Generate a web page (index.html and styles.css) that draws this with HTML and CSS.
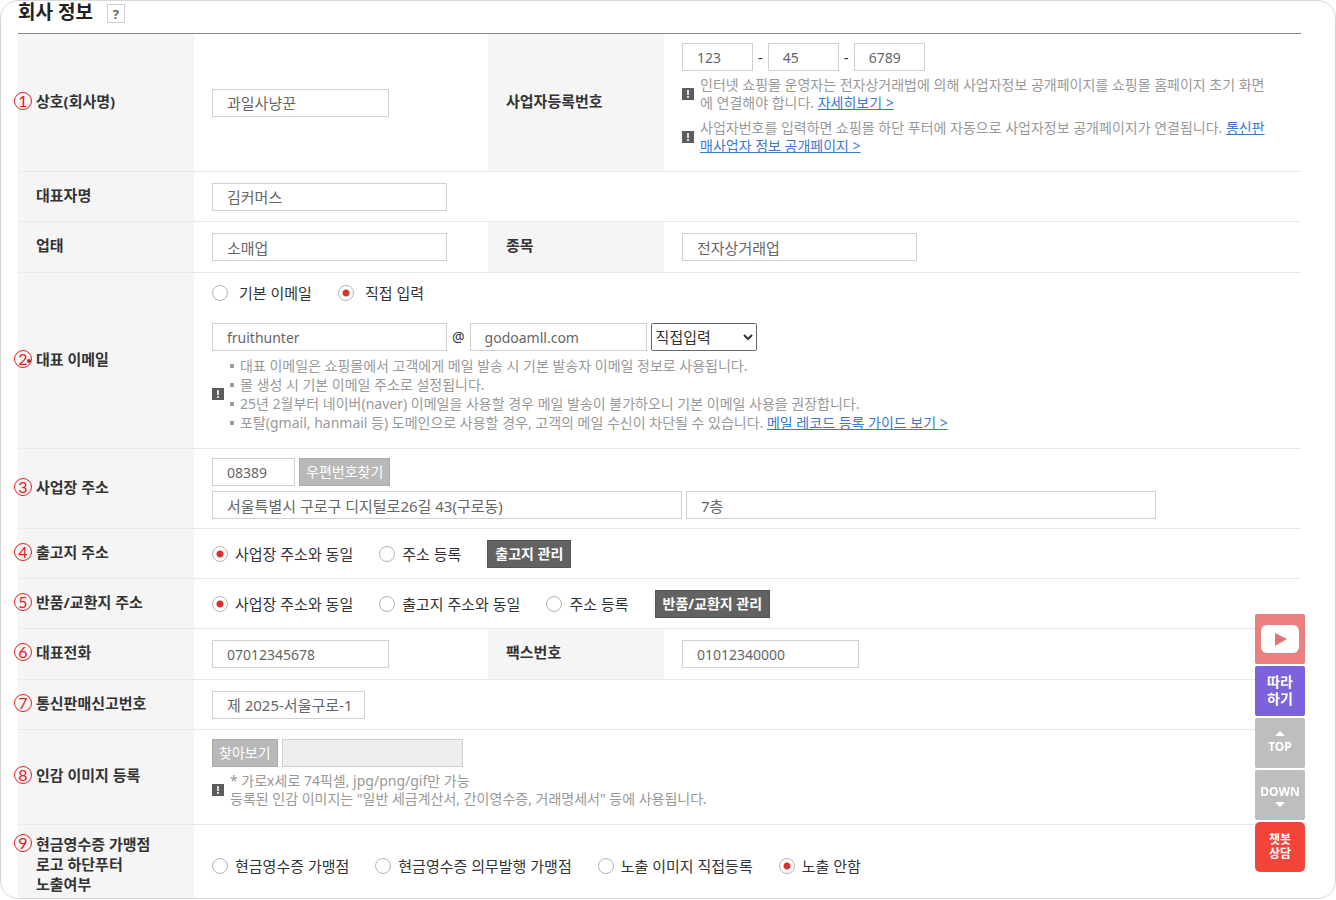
FILE: index.html
```html
<!DOCTYPE html>
<html lang="ko">
<head>
  <meta charset="UTF-8">
  <meta name="viewport" content="width=device-width, initial-scale=1.0">
  <title>회사 정보</title>
  <link rel="stylesheet" href="styles.css">
</head>
<body>
  <main class="frame">
    <header class="page-title">
      <h1>회사 정보</h1>
      <button type="button" class="btn-help">?</button>
    </header>

    <form>
      <table class="form-table">
        <colgroup>
          <col class="col-label"><col class="col-field"><col class="col-label"><col>
        </colgroup>
        <tbody>
          <tr>
            <th><div class="label"><span class="num">1</span><label for="company">상호(회사명)</label></div></th>
            <td><input type="text" id="company" class="w-md" value="과일사냥꾼"></td>
            <th><div class="label"><label for="bizNo1">사업자등록번호</label></div></th>
            <td>
              <div class="line biz-no">
                <input type="text" id="bizNo1" class="w-xs latin" value="123">
                <span>-</span>
                <input type="text" class="w-xs latin" value="45" aria-label="사업자등록번호">
                <span>-</span>
                <input type="text" class="w-xs latin" value="6789" aria-label="사업자등록번호">
              </div>
              <div class="notice">
                <svg class="mark" viewBox="0 0 12 12"><rect width="12" height="12" fill="#5c5c5c"/><path d="M5 2h2v5H5zM5 8h2v2H5z" fill="#ddd"/></svg>
                <p>인터넷 쇼핑몰 운영자는 전자상거래법에 의해 사업자정보 공개페이지를 쇼핑몰 홈페이지 초기 화면에 연결해야 합니다. <a href="#">자세히보기 &gt;</a></p>
              </div>
              <div class="notice">
                <svg class="mark" viewBox="0 0 12 12"><rect width="12" height="12" fill="#5c5c5c"/><path d="M5 2h2v5H5zM5 8h2v2H5z" fill="#ddd"/></svg>
                <p>사업자번호를 입력하면 쇼핑몰 하단 푸터에 자동으로 사업자정보 공개페이지가 연결됩니다. <a href="#">통신판매사업자 정보 공개페이지 &gt;</a></p>
              </div>
            </td>
          </tr>
          <tr>
            <th><div class="label"><label for="ceo">대표자명</label></div></th>
            <td colspan="3"><input type="text" id="ceo" class="w-lg" value="김커머스"></td>
          </tr>
          <tr class="row-pair">
            <th><div class="label"><label for="service">업태</label></div></th>
            <td><input type="text" id="service" class="w-lg" value="소매업"></td>
            <th><div class="label"><label for="item">종목</label></div></th>
            <td><input type="text" id="item" class="w-lg" value="전자상거래업"></td>
          </tr>
          <tr>
            <th><div class="label"><span class="num dot">2</span><label for="emailId">대표 이메일</label></div></th>
            <td colspan="3">
              <div class="radios radios-wide">
                <label><input type="radio" name="emailType">기본 이메일</label>
                <label><input type="radio" name="emailType" checked>직접 입력</label>
              </div>
              <div class="line">
                <input type="text" id="emailId" class="w-lg latin" value="fruithunter">
                <span class="at">@</span>
                <input type="text" class="w-md latin" value="godoamll.com" aria-label="이메일 도메인">
                <select aria-label="도메인 선택">
                  <option>직접입력</option>
                </select>
              </div>
              <div class="notice">
                <svg class="mark" viewBox="0 0 12 12"><rect width="12" height="12" fill="#5c5c5c"/><path d="M5 2h2v5H5zM5 8h2v2H5z" fill="#ddd"/></svg>
                <ul>
                  <li>대표 이메일은 쇼핑몰에서 고객에게 메일 발송 시 기본 발송자 이메일 정보로 사용됩니다.</li>
                  <li>몰 생성 시 기본 이메일 주소로 설정됩니다.</li>
                  <li>25년 2월부터 네이버(naver) 이메일을 사용할 경우 메일 발송이 불가하오니 기본 이메일 사용을 권장합니다.</li>
                  <li>포탈(gmail, hanmail 등) 도메인으로 사용할 경우, 고객의 메일 수신이 차단될 수 있습니다. <a href="#">메일 레코드 등록 가이드 보기 &gt;</a></li>
                </ul>
              </div>
            </td>
          </tr>
          <tr>
            <th><div class="label"><span class="num">3</span><label for="zip">사업장 주소</label></div></th>
            <td colspan="3">
              <div class="line">
                <input type="text" id="zip" class="w-sm latin" value="08389">
                <button type="button" class="btn btn-gray">우편번호찾기</button>
              </div>
              <div class="line line-addr">
                <input type="text" class="w-xl" value="서울특별시 구로구 디지털로26길 43(구로동)" aria-label="주소">
                <input type="text" class="w-xl" value="7층" aria-label="상세주소">
              </div>
            </td>
          </tr>
          <tr>
            <th><div class="label"><span class="num">4</span>출고지 주소</div></th>
            <td colspan="3">
              <div class="radios">
                <label><input type="radio" name="shipAddr" checked>사업장 주소와 동일</label>
                <label><input type="radio" name="shipAddr">주소 등록</label>
                <button type="button" class="btn btn-dark">출고지 관리</button>
              </div>
            </td>
          </tr>
          <tr>
            <th><div class="label"><span class="num">5</span>반품/교환지 주소</div></th>
            <td colspan="3">
              <div class="radios">
                <label><input type="radio" name="returnAddr" checked>사업장 주소와 동일</label>
                <label><input type="radio" name="returnAddr">출고지 주소와 동일</label>
                <label><input type="radio" name="returnAddr">주소 등록</label>
                <button type="button" class="btn btn-dark">반품/교환지 관리</button>
              </div>
            </td>
          </tr>
          <tr class="row-pair">
            <th><div class="label"><span class="num">6</span><label for="phone">대표전화</label></div></th>
            <td><input type="text" id="phone" class="w-md latin" value="07012345678"></td>
            <th><div class="label"><label for="fax">팩스번호</label></div></th>
            <td><input type="text" id="fax" class="w-md latin" value="01012340000"></td>
          </tr>
          <tr>
            <th><div class="label"><span class="num">7</span><label for="onlineNo">통신판매신고번호</label></div></th>
            <td colspan="3"><input type="text" id="onlineNo" class="w-no" value="제 2025-서울구로-1234"></td>
          </tr>
          <tr>
            <th><div class="label"><span class="num">8</span><label for="stamp">인감 이미지 등록</label></div></th>
            <td colspan="3">
              <div class="line">
                <button type="button" class="btn btn-gray">찾아보기</button>
                <input type="text" id="stamp" class="w-file" disabled>
              </div>
              <div class="notice">
                <svg class="mark" viewBox="0 0 12 12"><rect width="12" height="12" fill="#5c5c5c"/><path d="M5 2h2v5H5zM5 8h2v2H5z" fill="#ddd"/></svg>
                <p>* 가로x세로 74픽셀, jpg/png/gif만 가능<br>등록된 인감 이미지는 "일반 세금계산서, 간이영수증, 거래명세서" 등에 사용됩니다.</p>
              </div>
            </td>
          </tr>
          <tr class="row-last">
            <th><div class="label label-top"><span class="num">9</span><span>현금영수증 가맹점<br>로고 하단푸터<br>노출여부</span></div></th>
            <td colspan="3">
              <div class="radios">
                <label><input type="radio" name="receipt">현금영수증 가맹점</label>
                <label><input type="radio" name="receipt">현금영수증 의무발행 가맹점</label>
                <label><input type="radio" name="receipt">노출 이미지 직접등록</label>
                <label><input type="radio" name="receipt" checked>노출 안함</label>
              </div>
            </td>
          </tr>
        </tbody>
      </table>
    </form>
  </main>

  <nav class="quick">
    <a href="#" class="q-youtube" aria-label="YouTube">
      <svg width="38" height="30" viewBox="0 0 38 30"><rect width="38" height="28" y="1" rx="6" fill="#fff"/><path d="M14 9l12 6-12 7z" fill="#e57373"/></svg>
    </a>
    <a href="#" class="q-guide">따라<br>하기</a>
    <a href="#" class="q-move">
      <svg width="10" height="5" viewBox="0 0 10 5"><path d="M5 0l5 5H0z" fill="#fff"/></svg>
      TOP
    </a>
    <a href="#" class="q-move">
      DOWN
      <svg width="10" height="5" viewBox="0 0 10 5"><path d="M0 0h10L5 5z" fill="#fff"/></svg>
    </a>
    <a href="#" class="q-chat">챗봇<br>상담</a>
  </nav>
</body>
</html>
```
FILE: styles.css
```css
* {
  box-sizing: border-box;
}
body {
  margin: 0;
  background: #fff;
  color: #333;
  font-family: "Noto Sans", "Noto Sans CJK KR", sans-serif;
  font-size: 15px;
  line-height: 20px;
}
h1, p, ul {
  margin: 0;
  padding: 0;
}
.frame {
  height: calc(100vh - 1px);
  overflow: hidden;
  padding: 0 34px 0 17px;
  border: 1px solid #d8d8d8;
  border-radius: 18px;
}

/* title */
.page-title {
  display: flex;
  align-items: flex-start;
  gap: 14px;
  height: 32px;
}
.page-title h1 {
  font-size: 19px;
  line-height: 22px;
  color: #222;
}
.btn-help {
  width: 18px;
  height: 19px;
  margin-top: 3px;
  padding: 0;
  border: 1px solid #ccc;
  background: #fff;
  color: #666;
  font: bold 13px/16px "Noto Sans", sans-serif;
}

/* table */
.form-table {
  width: 100%;
  border-top: 1px solid #888;
  border-spacing: 0;
  table-layout: fixed;
}
.col-label {
  width: 176px;
}
.col-field {
  width: 294px;
}
th, td {
  height: 50px;
  border-bottom: 1px solid #e8e8e8;
  text-align: left;
  vertical-align: middle;
}
th {
  padding: 7px 0 11px 18px;
  background: #f5f5f5;
}
td {
  padding: 9px 18px;
}
.row-pair th, .row-pair td {
  height: 51px;
}
.row-last th, .row-last td {
  height: 82px;
}
.label {
  display: flex;
  align-items: center;
}
.label-top {
  align-items: flex-start;
}
.num {
  position: relative;
  flex: none;
  width: 18px;
  height: 18px;
  margin: 0 4px 0 -22px;
  border: 1px solid #e02020;
  border-radius: 50%;
  color: #e02020;
  font: 16px/16px Lato, "Noto Sans", sans-serif;
  text-align: center;
}
.dot::after {
  content: "";
  position: absolute;
  right: 0;
  top: 8px;
  width: 4px;
  height: 4px;
  border-radius: 50%;
  background: #b03030;
}

/* fields */
input[type="text"] {
  display: block;
  height: 28px;
  padding: 0 14px;
  border: 1px solid #d0d0d0;
  background: #fff;
  color: #666;
  font: inherit;
}
input[type="text"].latin {
  font-size: 14px;
}
input[type="text"]:disabled {
  background: #eee;
}
.w-xs { width: 71px; }
.w-sm { width: 83px; }
.w-no { width: 153px; }
.w-md { width: 177px; }
.w-file { width: 181px; }
.w-lg { width: 235px; }
.w-xl { width: 470px; }
.line {
  display: flex;
  align-items: center;
  gap: 4px;
}
.line-addr {
  margin-top: 5px;
}
.biz-no {
  gap: 5px;
}
.at {
  padding: 0 1px;
  font-size: 14px;
}
select {
  width: 106px;
  height: 28px;
  border: 1px solid #666;
  border-radius: 2px;
  background: #fff;
  color: #333;
  font: inherit;
}
.btn {
  height: 28px;
  padding: 0 7px;
  border: 1px solid #aaa;
  color: #fff;
  font: 14px/20px "Noto Sans", "Noto Sans CJK KR", sans-serif;
}
.btn-gray {
  padding: 0 6px;
  background: #b8b8b8;
}
.btn-dark {
  border-color: #555;
  background: #626262;
  font-weight: bold;
}
.radios {
  display: flex;
  align-items: center;
  gap: 26px;
}
.radios label {
  display: flex;
  align-items: center;
  gap: 7px;
}
.radios-wide {
  height: 22px;
  margin-bottom: 19px;
}
.radios-wide label {
  gap: 11px;
}
input[type="radio"] {
  appearance: none;
  width: 16px;
  height: 16px;
  margin: 0;
  border: 1px solid #b5b5b5;
  border-radius: 50%;
  background: #fff;
}
input[type="radio"]:checked {
  background: radial-gradient(circle, #d9342b 3px, #fff 4px);
}

/* help text */
.notice {
  display: flex;
  align-items: center;
  gap: 6px;
  margin: 5px 0 7px;
  color: #999;
  font-size: 14px;
  line-height: 18px;
}
.notice + .notice {
  margin-top: 0;
}
.notice p {
  max-width: 575px;
}
.mark {
  flex: none;
  width: 12px;
  height: 12px;
}
.notice ul {
  list-style: none;
  line-height: 19px;
}
.notice li {
  display: flex;
  align-items: center;
  white-space: pre;
}
.notice li::before {
  content: "";
  width: 4px;
  height: 4px;
  margin-right: 6px;
  border-radius: 1px;
  background: #999;
}
.notice a {
  color: #3b78cf;
}

/* floating menu */
.quick {
  position: fixed;
  right: 31px;
  bottom: 28px;
  display: flex;
  flex-direction: column;
  gap: 2px;
}
.quick a {
  display: flex;
  flex-direction: column;
  align-items: center;
  justify-content: center;
  gap: 2px;
  width: 50px;
  height: 50px;
  border-radius: 2px;
  color: #fff;
  font-size: 14px;
  font-weight: bold;
  line-height: 17px;
  text-decoration: none;
}
.quick .q-youtube {
  background: #ec8080;
}
.quick .q-guide {
  display: block;
  padding-top: 7px;
  background: #7c62dc;
  text-align: center;
}
.quick .q-move {
  background: #bcbebf;
  font-size: 12px;
}
.quick .q-chat {
  display: block;
  padding-top: 11px;
  border-radius: 5px;
  background: #f2453a;
  font-size: 12px;
  line-height: 14px;
  text-align: center;
}
```
